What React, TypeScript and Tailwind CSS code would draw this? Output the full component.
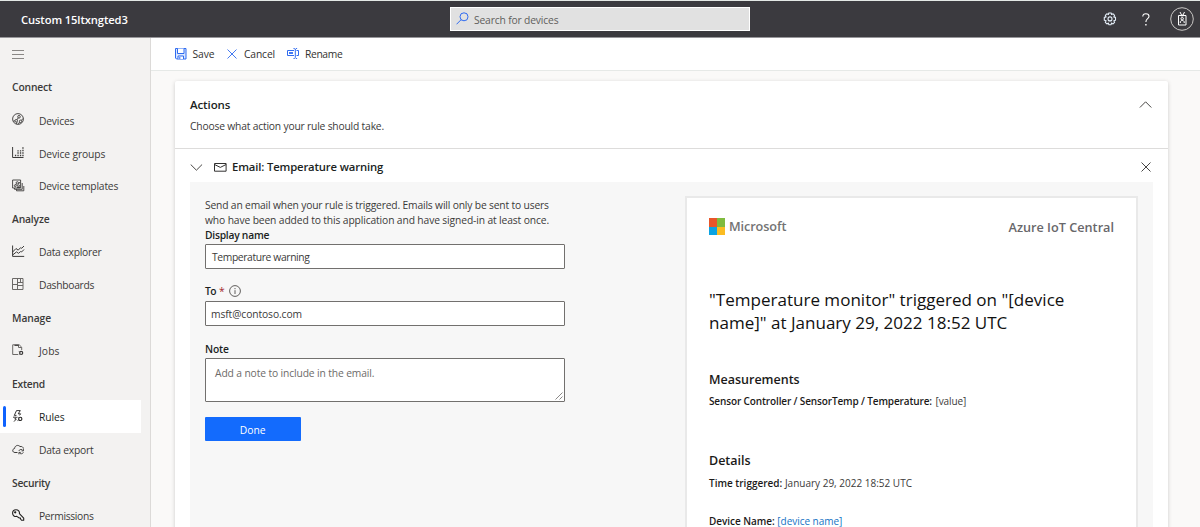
import React from "react";

type IconProps = { className?: string };

const line = { fill: "none", stroke: "currentColor", strokeWidth: 1 } as const;

const SaveIcon = () => (
  <svg width="12" height="12" viewBox="0 0 12 12" {...line}>
    <path d="M.5 .5h10.500v10.500H1.500L.5 10z" fill="#dbe8ff" />
    <path d="M2.500 .5v5h6.500v-5" fill="#fff" />
    <path d="M3 11V8h5.500v3" fill="#fff" />
    <path d="M4.800 9v2" />
  </svg>
);

const CrossIcon = ({ className }: IconProps) => (
  <svg className={className} width="10" height="10" viewBox="0 0 10 10" {...line} strokeWidth="0.900">
    <path d="M.5 .5l9 9M9.500 .5l-9 9" />
  </svg>
);

const RenameIcon = () => (
  <svg width="12" height="12" viewBox="0 0 12 12" {...line}>
    <path d="M7 2.500H.5v5H7M9.500 2.500h2v5h-2M6.500 .5h1l.8 .8 .8-.8h1M8.300 1v8.500M6.500 10.500h1l.8-.8 .8 .8h1" />
    <path d="M2 4.500h4M2 5.500h4" strokeWidth="0.900" />
  </svg>
);

const SearchIcon = () => (
  <svg width="13" height="13" viewBox="0 0 13 13" {...line}>
    <circle cx="8" cy="4.800" r="4" />
    <path d="M5.200 7.600L.5 12.300" />
  </svg>
);

const GearIcon = () => (
  <svg width="14" height="14" viewBox="0 0 14 14" {...line} stroke="#e4eef8" strokeWidth="1.100">
    <path d="M5.800 1h2.400l.4 1.500 1.500-.7 1.500 1.500-.8 1.600 1.700.5v2.900l-1.700.5.8 1.500-1.600 1.600-1.500-.8-.4 1.600H5.800l-.4-1.600-1.500.8-1.600-1.600.8-1.500L1.300 8.300V5.400l1.800-.5-.8-1.600 1.500-1.500 1.600.7z" strokeLinejoin="round" />
    <circle cx="7" cy="6.900" r="2" />
  </svg>
);

const HelpIcon = () => (
  <svg width="8" height="13" viewBox="0 0 8 13" {...line} strokeWidth="1.100">
    <path d="M.8 3.500C.8 1.700 2 .7 3.900 .7S7 1.700 7 3.300C7 5.800 3.900 5.700 3.900 8.900" />
    <path d="M3.200 11.700h1.400" strokeWidth="1.400" />
  </svg>
);

const BadgeIcon = () => (
  <svg width="24" height="24" viewBox="0 0 24 24" {...line}>
    <circle cx="12" cy="12" r="11.300" stroke="#c8c6c4" />
    <path d="M8.500 8.500h7.500v9.500H8.500zM10 5l1.500 3M14.500 5L13 8" />
    <circle cx="12.200" cy="11.700" r="1.200" />
    <path d="M10.300 16v-1c0-2 3.900-2 3.900 0v1" />
    <path d="M11 8.500h2.500" strokeWidth="1.600" />
  </svg>
);

const ChevronIcon = ({ className }: IconProps) => (
  <svg className={className} width="13" height="7" viewBox="0 0 13 7" {...line}>
    <path d="M.7 .5l5.700 5.700L12.100 .5" />
  </svg>
);

const MailIcon = () => (
  <svg width="13" height="9" viewBox="0 0 13 9" {...line}>
    <path d="M.5 .5h11.600v7.700H.5zM.5 1.500l5.800 2.900 5.800-2.900" />
  </svg>
);

const InfoIcon = () => (
  <svg width="12" height="12" viewBox="0 0 12 12" {...line}>
    <circle cx="6" cy="6" r="5.400" />
    <path d="M6 5.200v3.800M6 3v1.200" />
  </svg>
);

const DevicesIcon = () => (
  <svg width="13" height="13" viewBox="0 0 13 13" {...line} strokeWidth="0.900">
    <circle cx="6" cy="6" r="5.400" />
    <circle cx="7" cy="3.800" r="1.300" />
    <circle cx="4.200" cy="7.800" r="1.300" />
    <circle cx="8.600" cy="8.300" r="1.200" />
    <path d="M6.200 4.800L5 6.800M1.300 8.200l1.600-.4M5 9l-.5 2M7.600 9l-1.200 2M11 5.500L9.500 7.200" />
  </svg>
);

const GroupsIcon = () => (
  <svg width="13" height="13" viewBox="0 0 13 13" {...line}>
    <path d="M.6 1v10.500h10.900" />
    <path d="M2.900 9.500h1.300M5.400 9.500h1.300M5.400 7h1.300M5.400 4.800h1.300M7.900 9.500h1.300M7.900 7h1.300M7.900 4.800h1.300M10.300 9.500h1.300M10.300 7h1.300M10.300 4.500h1.300M10.300 2h1.300" strokeWidth="1.300" />
  </svg>
);

const TemplatesIcon = () => (
  <svg width="13" height="13" viewBox="0 0 13 13" {...line} strokeWidth="0.900">
    <path d="M.6 1h8v8h-8z" />
    <path d="M2.500 9v1.300h7.700V4M4.500 10.300v1.500h7.300V7" />
    <circle cx="5.300" cy="3.900" r="1.200" />
    <circle cx="3.300" cy="6.700" r="1" />
    <circle cx="6.500" cy="6.800" r="1" />
    <path d="M4.500 4.800L3.600 6M6.500 5l1.500-2M5 8.500h3" />
  </svg>
);

const ExplorerIcon = () => (
  <svg width="13" height="13" viewBox="0 0 13 13" {...line}>
    <path d="M.6 .5v10.900h11.600" />
    <path d="M.6 7l3.400-3.500 2.200 1.700L8.500 2.700l1.200 .6 2.300-2.300M1 9.700l3.500-2.800 2 1.400 2-1.700 1.200.3L12 4.500" />
  </svg>
);

const DashboardsIcon = () => (
  <svg width="13" height="13" viewBox="0 0 13 13" {...line}>
    <path d="M.5 .5h10.500v11H.5zM5.500 .5v11M.5 6.500h5M5.500 7.500H11M8.500 .5v4M5.500 4.500H11" stroke="#6b6967" />
  </svg>
);

const JobsIcon = () => (
  <svg width="13" height="13" viewBox="0 0 13 13" {...line}>
    <path d="M6 10.500H.7V.8h6.500l2.500 2.400V6M6.500 .8v2.700h3.200" stroke="#6b6967" />
    <path d="M2.500 1.300h4" strokeWidth="1.200" />
    <circle cx="9.200" cy="8.900" r="1.500" strokeWidth="1.200" />
    <path d="M6.800 7.500l1 .6M6.800 10.400l1-.6" />
  </svg>
);

const RulesIcon = () => (
  <svg width="13" height="13" viewBox="0 0 13 13" {...line} strokeWidth="0.900">
    <path d="M4.500 .6h3.800L6.200 3.800h2.400L7.500 5.400M4.500 .6L2.300 5.400H4.500M1 7.200h3.500L2.700 9h1.600L2 11.600" />
    <circle cx="8.300" cy="8.900" r="1.600" strokeWidth="1.100" />
    <path d="M5.500 7.200l1.300 .8M5.500 10.600l1.300-.8" />
  </svg>
);

const ExportIcon = () => (
  <svg width="13" height="13" viewBox="0 0 13 13" {...line}>
    <path d="M5.500 9.500H3C.2 9.500 -.1 6 2.600 5.500 2.700 2.800 6 1.200 8 3.600 9.800 3 11.300 4.200 11.400 5.600" />
    <path d="M6.800 8c.6-2 3.500-2 4.200-.4M11.400 6v1.900H9.500M11.400 9.300c-.7 1.900-3.300 1.900-4.100.4M6.900 11.300V9.400h1.900" strokeWidth="0.900" />
  </svg>
);

const PermissionsIcon = () => (
  <svg width="13" height="13" viewBox="0 0 13 13" {...line} stroke="#201f1e" strokeWidth="1.100">
    <path d="M4.800 7.400C2.800 8 .6 6.600 .6 4.300 .6 2.200 2.200 .7 4 .7c2.200 0 3.900 1.900 3.400 4l4.300 4.400v2.200H9.700L8.500 10V9H7.300z" strokeLinejoin="round" />
    <circle cx="3.200" cy="3.300" r=".6" fill="currentColor" />
  </svg>
);

type NavItem = { label: string; icon?: React.ReactNode; spacing: string; active?: boolean };

const nav: NavItem[] = [
  { label: "Connect", spacing: "tracking-[-0.15px]" },
  { label: "Devices", icon: <DevicesIcon />, spacing: "tracking-[-0.2px]" },
  { label: "Device groups", icon: <GroupsIcon />, spacing: "tracking-[-0.13px]" },
  { label: "Device templates", icon: <TemplatesIcon />, spacing: "tracking-[-0.2px]" },
  { label: "Analyze", spacing: "tracking-[-0.15px]" },
  { label: "Data explorer", icon: <ExplorerIcon />, spacing: "tracking-[-0.25px]" },
  { label: "Dashboards", icon: <DashboardsIcon />, spacing: "tracking-[-0.29px]" },
  { label: "Manage", spacing: "tracking-[-0.1px]" },
  { label: "Jobs", icon: <JobsIcon />, spacing: "tracking-[0.1px]" },
  { label: "Extend", spacing: "tracking-[-0.25px]" },
  { label: "Rules", icon: <RulesIcon />, spacing: "tracking-[-0.05px]", active: true },
  { label: "Data export", icon: <ExportIcon />, spacing: "tracking-[-0.22px]" },
  { label: "Security", spacing: "tracking-[-0.26px]" },
  { label: "Permissions", icon: <PermissionsIcon />, spacing: "tracking-[-0.33px]" },
];

function Header() {
  return (
    <header className="flex h-[38px] shrink-0 items-center border-t border-b border-t-[#e3e8e5] border-b-[#97969a] bg-[#3b3a3f] text-white">
      <div className="w-[450px] pt-[2px] pl-[21px] text-[11.2px] font-semibold tracking-[-0.1px]">Custom 15ltxngted3</div>
      <div className="flex h-[24px] w-[300px] items-center border border-white bg-[#e1e1e1] pl-[5px] text-[10.3px] tracking-[-0.16px] text-[#605e5c]">
        <span className="mr-[5px] mb-[2px] text-[#2f6bf0]"><SearchIcon /></span>
        <span className="pt-[3px]">Search for devices</span>
      </div>
      <div className="ml-auto flex items-center pr-[6px]">
        <GearIcon />
        <span className="ml-[25px]"><HelpIcon /></span>
        <span className="ml-[20px]"><BadgeIcon /></span>
      </div>
    </header>
  );
}

function Sidebar() {
  return (
    <nav className="w-[151px] shrink-0 overflow-hidden border-r border-[#dcdad8] bg-[#f3f2f1] text-[#3b3a39]">
      <div className="flex h-[33px] items-center pl-[12px]">
        <div className="flex w-[12px] flex-col gap-[3px]">
          <div className="h-px bg-[#8a8886]" />
          <div className="h-px bg-[#8a8886]" />
          <div className="h-px bg-[#8a8886]" />
        </div>
      </div>
      {nav.map((item) =>
        item.icon ? (
          <div
            key={item.label}
            className={`flex h-[32.95px] items-center text-[10.3px] ${item.active ? "mr-[9px] bg-white text-[#201f1e]" : ""}`}
          >
            <div className={`ml-[3px] h-[21px] w-[3px] rounded-full ${item.active ? "bg-[#0f62fe]" : ""}`} />
            <div className="mb-px ml-[6px] w-[27px]">{item.icon}</div>
            <div className={`pt-[1.800px] ${item.spacing}`}>{item.label}</div>
          </div>
        ) : (
          <div key={item.label} className="flex h-[32.95px] items-center pt-[1.400px] pl-[12px] text-[10.3px] font-semibold">
            <span className={item.spacing}>{item.label}</span>
          </div>
        )
      )}
    </nav>
  );
}

function CommandBar() {
  return (
    <div className="flex h-[33px] shrink-0 items-center border-b border-[#e6e9e7] bg-white pl-[24px] text-[10.3px] text-[#323130]">
      <span className="w-[17.5px] text-[#2f6bf0]"><SaveIcon /></span>
      <span className="w-[34.5px] pt-[2px] tracking-[-0.08px]">Save</span>
      <span className="mb-px w-[17px] text-[#2f6bf0]"><CrossIcon /></span>
      <span className="w-[43px] pt-[2px] tracking-[-0.14px]">Cancel</span>
      <span className="w-[18px] text-[#2f6bf0]"><RenameIcon /></span>
      <span className="pt-[2px] tracking-[-0.36px]">Rename</span>
    </div>
  );
}

function EmailForm() {
  return (
    <div className="w-[360px] pt-[16px] text-[10.3px] leading-[15px] text-[#3b3a39]">
      <p className="whitespace-nowrap tracking-[-0.17px]">Send an email when your rule is triggered. Emails will only be sent to users</p>
      <p className="whitespace-nowrap tracking-[-0.13px]">who have been added to this application and have signed-in at least once.</p>
      <div className="font-semibold tracking-[-0.25px] text-[#201f1e]">Display name</div>
      <div className="mt-px flex h-[25px] items-center rounded-[1px] border border-[#72706e] bg-white pt-[2px] pl-[6px] tracking-[-0.36px]">Temperature warning</div>
      <div className="mt-[14px] flex h-[16px] items-center font-semibold text-[#201f1e]">
        <span className="tracking-[-0.5px]">To</span>
        <span className="ml-[3px] font-normal text-[#a4262c]">*</span>
        <span className="ml-[4px] text-[#605e5c]"><InfoIcon /></span>
      </div>
      <div className="mt-[2px] flex h-[25px] items-center rounded-[1px] border border-[#72706e] bg-white pt-[2px] pl-[5px] tracking-[-0.1px]">msft@contoso.com</div>
      <div className="mt-[16px] font-semibold tracking-[-0.15px] text-[#201f1e]">Note</div>
      <div className="mt-px flex h-[44px] items-start justify-between rounded-[1px] border border-[#72706e] bg-white pt-[7px] pl-[9px] text-[#6d6b69]">
        <span className="tracking-[-0.13px]">Add a note to include in the email.</span>
        <svg className="mr-px mb-px self-end" width="8" height="8" viewBox="0 0 8 8" {...line} strokeWidth="0.800">
          <path d="M.5 7.500l7-7M4.500 7.500l3-3" />
        </svg>
      </div>
      <button className="mt-[15px] flex h-[24px] w-[95.5px] items-center justify-center rounded-[1px] bg-[#136bfd] pt-[2px] text-[10.3px] text-white">Done</button>
    </div>
  );
}

function EmailPreview() {
  return (
    <div className="mt-[14px] mr-[15px] h-[420px] w-[453px] border-2 border-[#e9e9e9] bg-white px-[22px] pt-[19px] text-[10px] text-[#1b1a19]">
      <div className="flex h-[20px] items-center justify-between font-semibold text-[#68676a]">
        <div className="flex items-center">
          <div className="mr-[4px] grid h-[17px] w-[16px] grid-cols-2 grid-rows-2">
            <div className="bg-[#e8562a]" />
            <div className="bg-[#80bb3f]" />
            <div className="bg-[#0ba3e2]" />
            <div className="bg-[#fbbc22]" />
          </div>
          <span className="text-[12.7px] tracking-[-0.1px] text-[#737373]">Microsoft</span>
        </div>
        <span className="pt-px text-[12.7px]">Azure IoT Central</span>
      </div>
      <div className="mt-[52px] text-[17.05px] leading-[22.5px] whitespace-nowrap text-[#111]">
        <div>"Temperature monitor" triggered on "[device</div>
        <div>name]" at January 29, 2022 18:52 UTC</div>
      </div>
      <div className="mt-[36px] text-[12.5px] leading-[20px] font-semibold">Measurements</div>
      <div className="mt-[4px] leading-[15px]">
        <span className="font-semibold tracking-[-0.13px]">Sensor Controller / SensorTemp / Temperature:</span>{" "}
        <span className="ml-px tracking-[-0.1px] text-[#3b3a39]">[value]</span>
      </div>
      <div className="mt-[42px] text-[12.5px] leading-[20px] font-semibold">Details</div>
      <div className="mt-[5px] leading-[15px]">
        <span className="font-semibold">Time triggered:</span>{" "}
        <span className="text-[#3b3a39]">January 29, 2022 18:52 UTC</span>
      </div>
      <div className="mt-[24px] leading-[13px]">
        <span className="font-semibold tracking-[-0.04px]">Device Name:</span>{" "}
        <span className="tracking-[-0.04px] text-[#1473c4]">[device name]</span>
      </div>
    </div>
  );
}

function ActionsCard() {
  return (
    <section className="ml-[24px] mt-[10px] h-[500px] w-[993px] rounded-[2px] bg-white shadow-[0_1px_4px_rgba(0,0,0,0.18)]">
      <div className="flex h-[68px] justify-between border-b border-[#dddcdb] pt-[15px] pr-[16px] pl-[15px]">
        <div>
          <h2 className="text-[11.5px] leading-[18px] font-semibold tracking-[-0.1px] text-[#201f1e]">Actions</h2>
          <p className="mt-[4px] text-[10.3px] leading-[16px] tracking-[-0.19px] text-[#3b3a39]">Choose what action your rule should take.</p>
        </div>
        <ChevronIcon className="mt-[5px] rotate-180 text-[#484644]" />
      </div>
      <div className="flex h-[33px] items-center pt-[4px] pr-[17px] pl-[15px] text-[#323130]">
        <ChevronIcon className="text-[#484644]" />
        <span className="mb-px ml-[11px]"><MailIcon /></span>
        <h3 className="ml-[5px] text-[11.3px] font-semibold tracking-[-0.15px] text-[#201f1e]">Email: Temperature warning</h3>
        <CrossIcon className="mb-[2px] ml-auto" />
      </div>
      <div className="mx-[15px] flex h-[400px] justify-between bg-[#f7f7f7] pl-[15px]">
        <EmailForm />
        <EmailPreview />
      </div>
    </section>
  );
}

export default function App() {
  return (
    <div className="flex h-[527px] w-[1200px] flex-col overflow-hidden bg-[#faf9f8] font-['Open_Sans','Noto_Sans',sans-serif]">
      <Header />
      <div className="flex min-h-0 flex-1">
        <Sidebar />
        <main className="flex-1 overflow-hidden">
          <CommandBar />
          <ActionsCard />
        </main>
      </div>
    </div>
  );
}
